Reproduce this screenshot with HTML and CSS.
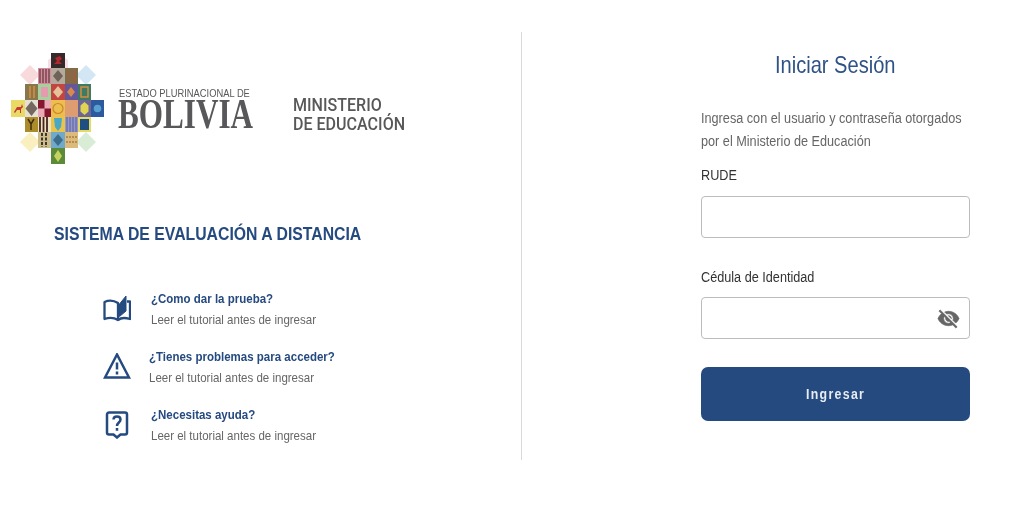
FILE: index.html
```html
<!DOCTYPE html>
<html lang="en">
<head>
    <meta charset="UTF-8">
    <title>Iniciar Sesión</title>
    <link rel="stylesheet" href="styles.css">
</head>
<body>
    <main class="page">
        <section class="info">
            <div class="brand">
                <svg class="mosaic" viewBox="8 50 100 116" width="100" height="116">
                    <path d="M30 65l10 10-10 10-10-10z" fill="#f8d9dc"/>
                    <path d="M86 65l10 10-10 10-10-10z" fill="#d3e6f3"/>
                    <path d="M30 132l10 10-10 10-10-10z" fill="#faf0bf"/>
                    <path d="M86 132l10 10-10 10-10-10z" fill="#d9ecd6"/>
                    <path d="M48 60l10-7 10 7v10H48z" fill="#f6dfe6"/>
                    <rect x="51" y="53" width="14" height="15" fill="#37282c"/>
                    <path d="M54 64l3-3-2-3 5-2 2 3-3 2 3 3-4 0z" fill="#b3262e"/>
                    <rect x="38" y="68" width="13" height="16" fill="#d58aa0"/>
                    <path d="M40 69v14M43 69v14M46 69v14M49 69v14" stroke="#5a3a34" stroke-width="1.2"/>
                    <rect x="51" y="68" width="14" height="16" fill="#b5aa9c"/>
                    <path d="M58 70l5 6-5 6-5-6z" fill="#6f6259"/>
                    <rect x="65" y="68" width="13" height="16" fill="#77704a"/>
                    <path d="M68 69v14M72 69v14M75 69v14" stroke="#b2563e" stroke-width="1.2"/>
                    <rect x="25" y="84" width="13" height="16" fill="#85784c"/>
                    <path d="M30 86v12M34 86v12" stroke="#dd8a3c" stroke-width="1.6"/>
                    <rect x="38" y="84" width="13" height="16" fill="#a8d09c"/>
                    <rect x="41" y="87" width="7" height="10" fill="#e59ab0"/>
                    <rect x="51" y="84" width="14" height="16" fill="#c4443f"/>
                    <path d="M58 86l5 6-5 6-5-6z" fill="#e3c49a"/>
                    <rect x="65" y="84" width="13" height="16" fill="#66579a"/>
                    <path d="M71 87l4 5-4 5-4-5z" fill="#d78a4e"/>
                    <rect x="78" y="84" width="13" height="16" fill="#3b7c62"/>
                    <rect x="81" y="87" width="7" height="10" fill="none" stroke="#d98b43" stroke-width="1.5"/>
                    <rect x="11" y="100" width="14" height="17" fill="#e9da66"/>
                    <path d="M14 112l3-5h4l1-3 1 3-2 2v4h-1v-3h-3l-2 3z" fill="#c6353a"/>
                    <rect x="25" y="100" width="13" height="17" fill="#e6e0d6"/>
                    <path d="M31.500 101l6 7.500-6 7.500-6-7.500z" fill="#75695f"/>
                    <rect x="38" y="100" width="13" height="17" fill="#e9a9b6"/>
                    <rect x="38" y="100" width="6.500" height="8.500" fill="#84172e"/>
                    <rect x="44.500" y="108.500" width="6.500" height="8.500" fill="#84172e"/>
                    <rect x="51" y="100" width="14" height="17" fill="#edbd4e"/>
                    <circle cx="58" cy="108.500" r="5" fill="none" stroke="#c88a30" stroke-width="1.200"/>
                    <rect x="65" y="100" width="13" height="17" fill="#dd9d70"/>
                    <rect x="78" y="100" width="13" height="17" fill="#6c6596"/>
                    <path d="M84.500 102l4 3.500v6l-4 3.500-4-3.500v-6z" fill="#dfd552"/>
                    <rect x="91" y="100" width="13" height="17" fill="#2d5a9e"/>
                    <circle cx="97.500" cy="108.500" r="3.800" fill="#58a0cf"/>
                    <rect x="25" y="117" width="13" height="15" fill="#ab8c2a"/>
                    <path d="M28 119l3 5 3-5M31 124v6" stroke="#3f2c16" stroke-width="1.500" fill="none"/>
                    <rect x="38" y="117" width="13" height="15" fill="#ece2c4"/>
                    <path d="M40 117v15M43.500 117v15M47 117v15" stroke="#45241e" stroke-width="1.800"/>
                    <rect x="51" y="117" width="14" height="15" fill="#eac449"/>
                    <path d="M54 118h8l-1 9-3 4-3-4z" fill="#49a8c6"/>
                    <rect x="65" y="117" width="13" height="15" fill="#9497c8"/>
                    <path d="M67 117v15M70 117v15M73 117v15M76 117v15" stroke="#565ea0" stroke-width="1"/>
                    <rect x="78" y="117" width="13" height="15" fill="#e6d964"/>
                    <rect x="80" y="119" width="9" height="11" fill="#1e4f80"/>
                    <rect x="38" y="132" width="13" height="16" fill="#cdbd8c"/>
                    <path d="M42 133v14M46 133v14" stroke="#2e2a22" stroke-width="1.800" stroke-dasharray="3 1.500"/>
                    <rect x="51" y="132" width="14" height="16" fill="#70a9c9"/>
                    <path d="M58 134l5 6-5 6-5-6z" fill="#3e6d8c"/>
                    <rect x="65" y="132" width="13" height="16" fill="#dbba7c"/>
                    <path d="M66 137h11M66 142h11" stroke="#a87e44" stroke-width="1.500" stroke-dasharray="2 1"/>
                    <rect x="51" y="148" width="14" height="16" fill="#5b8b38"/>
                    <path d="M58 150l4 6-4 6-4-6z" fill="#c5d260"/>
                </svg>
                <div class="country">
                    <span class="country-top">ESTADO PLURINACIONAL DE</span>
                    <span class="country-name">BOLIVIA</span>
                </div>
                <div class="ministry">
                    <span class="ministry-line">MINISTERIO</span>
                    <span class="ministry-line">DE EDUCACIÓN</span>
                </div>
            </div>

            <h2 class="system-title">SISTEMA DE EVALUACIÓN A DISTANCIA</h2>

            <ul class="help-list">
                <li class="help-item">
                    <svg class="help-icon" viewBox="-1 2 28 28" width="28" height="28" fill="none" stroke="#254a80" stroke-width="2.300">
                        <path d="M14 27C10 24.500 5 24.500 .5 26V9C5 7 10 7.500 14 10z" stroke-linejoin="round"/>
                        <path d="M23 8.500h3V26c-5-1.500-9-1.500-12 1" stroke-linejoin="round"/>
                        <path d="M15.500 23.500V11L22 3v15z" fill="#254a80" stroke-width="1"/>
                    </svg>
                    <div>
                        <a class="help-link">¿Como dar la prueba?</a>
                        <p class="help-note">Leer el tutorial antes de ingresar</p>
                    </div>
                </li>
                <li class="help-item shifted">
                    <svg class="help-icon" viewBox="0 0 28 28" width="28" height="28" fill="none" stroke="#254a80" stroke-width="2.500">
                        <path d="M14 1.500L2 24.500h24z"/>
                        <path d="M14 9.500v7M14 18.500v3"/>
                    </svg>
                    <div>
                        <a class="help-link">¿Tienes problemas para acceder?</a>
                        <p class="help-note">Leer el tutorial antes de ingresar</p>
                    </div>
                </li>
                <li class="help-item">
                    <svg class="help-icon" viewBox="0 0 28 28" width="28" height="28" fill="none" stroke="#254a80" stroke-width="2.500">
                        <path d="M6 1.500h16a2 2 0 0 1 2 2v18a2 2 0 0 1-2 2h-4.500l-3.500 3-3.500-3H6a2 2 0 0 1-2-2v-18a2 2 0 0 1 2-2z"/>
                        <path d="M10.500 8.500c0-2 1.500-3 3.500-3s3.500 1 3.500 3c0 3-3.500 3-3.500 6.500M14 17v2.800"/>
                    </svg>
                    <div>
                        <a class="help-link">¿Necesitas ayuda?</a>
                        <p class="help-note">Leer el tutorial antes de ingresar</p>
                    </div>
                </li>
            </ul>
        </section>

        <div class="divider"></div>

        <section class="login">
            <h1 class="login-title">Iniciar Sesión</h1>
            <p class="login-intro">
                <span class="squeeze">Ingresa con el usuario y contraseña otorgados</span>
                <span class="squeeze">por el Ministerio de Educación</span>
            </p>
            <label class="field-label"><span class="squeeze">RUDE</span></label>
            <div class="field first"></div>
            <label class="field-label second"><span class="squeeze">Cédula de Identidad</span></label>
            <div class="field field-eye">
                <svg viewBox="0 0 24 24" width="23" height="23" fill="#666" stroke="#666" stroke-width=".7">
                    <path d="M12 7c2.760 0 5 2.240 5 5 0 .650-.130 1.260-.360 1.830l2.920 2.920c1.510-1.260 2.700-2.890 3.430-4.750-1.730-4.390-6-7.500-11-7.500-1.400 0-2.740.250-3.980.700l2.160 2.160C10.740 7.130 11.350 7 12 7zM2 4.270l2.280 2.280.460.460C3.080 8.300 1.780 10.020 1 12c1.730 4.390 6 7.500 11 7.500 1.550 0 3.030-.300 4.380-.840l.420.420L19.730 22 21 20.730 3.270 3 2 4.270zM7.530 9.800l1.550 1.550c-.050.210-.080.430-.080.650 0 1.660 1.340 3 3 3 .220 0 .440-.030.650-.080l1.550 1.550c-.670.330-1.410.530-2.200.530-2.760 0-5-2.240-5-5 0-.790.200-1.530.530-2.200zm4.310-.780l3.150 3.150.020-.160c0-1.660-1.340-3-3-3l-.170.010z"/>
                </svg>
            </div>
            <button class="submit"><span class="submit-label">Ingresar</span></button>
        </section>
    </main>
</body>
</html>
```

FILE: styles.css
```css
* {
    box-sizing: border-box;
}
body {
    margin: 0;
    background: #ffffff;
    font-family: 'Liberation Sans', Arial, sans-serif;
    color: #555;
}
.page {
    display: flex;
    height: 512px;
    overflow: hidden;
}
.squeeze {
    display: block;
    transform: scaleX(.905);
    transform-origin: left center;
    white-space: nowrap;
}

/* left side */
.info {
    width: 521px;
    padding: 50px 0 0 8px;
}
.brand {
    display: flex;
    height: 116px;
}
.mosaic {
    flex: none;
    filter: blur(.5px);
}
.country {
    margin: 37px 0 0 10px;
    width: 175px;
    color: #58585a;
}
.country-top {
    display: block;
    margin-left: 1px;
    font-size: 10.5px;
    line-height: 13px;
    transform: scaleX(.89);
    transform-origin: left center;
    white-space: nowrap;
}
.country-name {
    display: block;
    margin-top: -3px;
    font-family: 'Liberation Serif', serif;
    font-weight: bold;
    font-size: 43px;
    line-height: 33px;
    transform: scaleX(.725);
    transform-origin: left center;
}
.ministry {
    margin-top: 45px;
    font-family: Roboto, 'Liberation Sans', sans-serif;
    font-size: 18px;
    font-weight: 500;
    line-height: 19px;
    color: #58585a;
}
.ministry-line {
    display: block;
    transform: scaleX(.892);
    transform-origin: left center;
    white-space: nowrap;
}
.system-title {
    margin: 56px 0 0 46px;
    font-size: 18px;
    line-height: 24px;
    color: #254a80;
    white-space: nowrap;
    transform: scaleX(.877);
    transform-origin: left center;
}
.help-list {
    list-style: none;
    margin: 34px 0 0;
    padding: 0 0 0 95px;
}
.help-item {
    display: flex;
    align-items: center;
    gap: 20px;
    height: 58px;
}
.help-item.shifted {
    gap: 18px;
}
.help-icon {
    flex: none;
}
.help-link {
    display: block;
    font-size: 13px;
    font-weight: bold;
    line-height: 20px;
    color: #254a80;
    transform: scaleX(.885);
    transform-origin: left center;
    white-space: nowrap;
}
.help-note {
    margin: 1px 0 0;
    font-size: 13px;
    line-height: 20px;
    color: #666;
    transform: scaleX(.885);
    transform-origin: left center;
    white-space: nowrap;
}

.divider {
    flex: none;
    width: 1px;
    height: 428px;
    margin-top: 32px;
    background: #d9d9d9;
}

/* login form */
.login {
    width: 268.500px;
    margin-left: 179px;
    padding-top: 50px;
}
.login-title {
    margin: 0;
    font-size: 24px;
    font-weight: normal;
    line-height: 30px;
    text-align: center;
    color: #2f5286;
    transform: scaleX(.837);
}
.login-intro {
    margin: 27px 0 0;
    font-size: 14px;
    line-height: 23px;
    color: #666;
}
.field-label {
    display: block;
    margin-top: 12px;
    font-size: 14px;
    line-height: 20px;
    color: #333;
}
.field-label.second {
    margin-top: 29px;
}
.field {
    height: 42px;
    margin-top: 10px;
    background: #fff;
    border: 1.500px solid #bcbcbc;
    border-radius: 4px;
}
.field.first {
    margin-top: 11px;
}
.field-eye {
    display: flex;
    align-items: center;
    justify-content: flex-end;
    padding-right: 9px;
}
.submit {
    display: block;
    width: 100%;
    height: 54px;
    margin-top: 28px;
    border: none;
    border-radius: 7px;
    background: #254a80;
    color: #e8edf4;
    font-family: 'Liberation Sans', Arial, sans-serif;
    font-size: 14px;
    font-weight: bold;
    letter-spacing: 1.500px;
}
.submit-label {
    display: inline-block;
    transform: scaleX(.88);
}
```
